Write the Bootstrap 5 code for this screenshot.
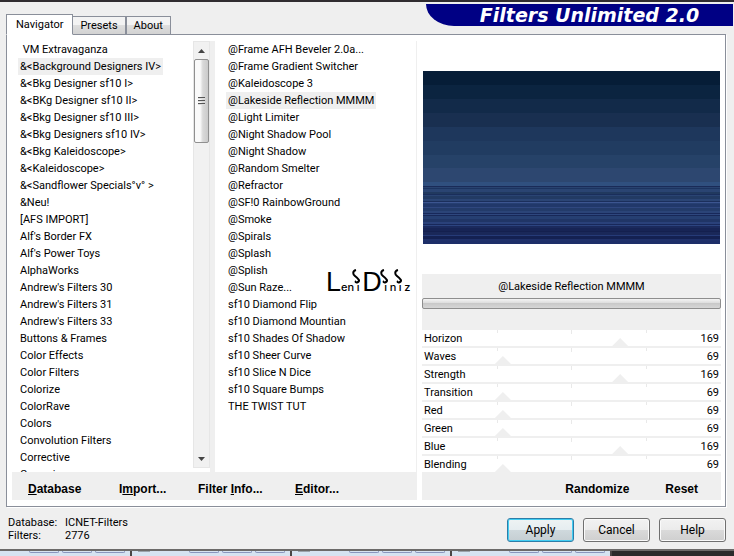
<!DOCTYPE html>
<html lang="en">
<head>
<meta charset="utf-8">
<meta name="viewport" content="width=device-width, initial-scale=1">
<title>Filters Unlimited 2.0</title>
<link href="https://cdn.jsdelivr.net/npm/bootstrap@5.3.0/dist/css/bootstrap.min.css" rel="stylesheet">
<style>
  :root { --face: #efefef; --edge: #8a8f9a; }
  body { font: 11px/17px Roboto, "Liberation Sans", sans-serif; color: #000; background: var(--face); }
  button { font: inherit; color: inherit; }
  .window-body { border-top: 2px solid #302c30; border-bottom: 2px solid #6c6a69; padding: 0 8px 7px 6px; min-height: 0; }
  .top-strip { height: 32px; margin-right: -7px; }
  .app-tabs { margin-bottom: -1px; z-index: 1; }
  .app-tabs .nav-link { border: 1px solid var(--edge); border-radius: 0; color: #000; padding: 0 7px; height: 19px; line-height: 18px; background: linear-gradient(#f3f3f3 50%, #dedede 50%, #d2d2d2); }
  .app-tabs .nav-item + .nav-item .nav-link { border-left-width: 0; }
  .app-tabs .nav-item:last-child .nav-link { border-left-width: 1px; }
  .app-tabs .nav-link.active { height: 21px; padding: 0 9px; line-height: 19px; background: #fff; border-color: var(--edge) var(--edge) #fff; color: #000; }
  .brand-banner { width: 307px; height: 22px; margin-top: 2px; background: #000084; border-bottom-left-radius: 28px 22px; color: #fff; font: italic bold 19px/22px "DejaVu Sans", sans-serif; padding-left: 20px; }
  .panel { border: 1px solid var(--edge); background: #fff; padding: 6px 4px 6px 5px; min-height: 0; box-shadow: 1px 1px #fff; }
  .lists-side { flex: 0 0 405px; min-width: 0; }
  .list-pair { min-height: 0; }
  .pick-list { min-height: 0; padding: 0 0 0 6px; }
  .pick-list button { border: 0; background: none; padding: 0 2px; height: 17px; line-height: 17px; white-space: pre; }
  .pick-list li { flex: 0 0 17px; height: 17px; }
  .pick-list button.chosen { background: var(--face); }
  .categories { flex: 0 0 181px; }
  .scroller { width: 17px; background: #f1f1f1; border: 1px solid #e6e6e6; }
  .scroller button { border: 0; background: none; padding: 0; height: 17px; line-height: 0; }
  .grip { height: 84px; border: 1px solid #909090; border-radius: 2px; background: linear-gradient(90deg, #fafafa 40%, #d9d9d9 60%, #cacaca); }
  .grip i { width: 7px; height: 2px; background: #555; border-bottom: 1px solid #ddd; margin-bottom: 1px; }
  .filters { border-left: 5px solid var(--face); border-right: 1px solid var(--face); padding-left: 11px; }
  .command-bar { height: 28px; flex: none; background: var(--face); font: bold 12px/28px "Liberation Sans", sans-serif; }
  .command-bar button { border: 0; background: none; padding: 0; line-height: 34px; text-align: left; }
  .list-commands { display: grid; grid-template-columns: 91px 79px 97px auto; padding-left: 16px; }
  .value-commands { gap: 36px; padding-right: 23px; }
  .settings-side { padding-left: 5px; min-width: 0; }
  .signature { position: absolute; left: 111px; top: 223px; font: 500 11px/36px Inter, sans-serif; pointer-events: none; }
  .signature .tall { font: 27px/36px "Liberation Sans Narrow", "Liberation Sans", sans-serif; }
  .signature .curl { position: relative; display: inline-block; width: 8px; line-height: 12px; text-align: center; }
  .signature svg { position: absolute; left: -2px; top: -12px; }
  .preview { height: 173px; margin: 30px 1px 30px; flex: none; }
  .info { background: var(--face); height: 56px; padding-top: 4px; }
  .info .progress { --bs-progress-height: 11px; border: 1px solid #8e8e8e; border-radius: 2px; background: linear-gradient(#f4f4f4, #dcdcdc 45%, #c9c9c9 50%, #d6d6d6); margin-top: 3px; }
  .control { height: 18px; border-bottom: 2px solid var(--face); padding: 0 2px; position: relative; }
  .control:last-child { height: 16px; border-bottom: 0; }
  .control input { position: absolute; left: -9px; right: -9px; top: 0; width: calc(100% + 18px); height: 17px; margin: 0; appearance: none;
    background: linear-gradient(#e9e9e9, #e9e9e9) calc(9px + (100% - 18px) * .25) 0 / 1px 3px no-repeat,
                linear-gradient(#e9e9e9, #e9e9e9) 50% 0 / 1px 4px no-repeat,
                linear-gradient(#e9e9e9, #e9e9e9) calc(9px + (100% - 18px) * .75) 0 / 1px 3px no-repeat; }
  .control input::-webkit-slider-thumb { appearance: none; width: 18px; height: 9px; margin-top: 8px; background: var(--face); clip-path: polygon(50% 0, 100% 100%, 0 100%); }
  .control input::-moz-range-thumb { width: 18px; height: 9px; border: 0; border-radius: 0; background: var(--face); clip-path: polygon(50% 0, 100% 100%, 0 100%); }
  .status { line-height: 13px; display: grid; grid-template-columns: 57px auto; margin: 9px 0 0 2px; }
  .dialog-row { gap: 9px; }
  .dialog-btn { width: 67px; height: 24px; padding: 0; font-size: 12px; line-height: 22px; color: #000; border: 1px solid #707070; border-radius: 3px; background: linear-gradient(#f2f2f2, #ebebeb 50%, #dadada 50%, #cfcfcf); box-shadow: inset 0 0 0 1px #fafafa; }
  .dialog-btn.preferred { border-color: #2d7da8; box-shadow: inset 0 0 0 1px #42cdf2; background: linear-gradient(#eef3f4, #e5edf0 50%, #cfd9dd 50%, #c5ced2); }
  .backdrop { height: 5px; background: #2b2b2b; }
  .cell { width: 160px; background: #d6e3f1; border-right: 2px solid #494545; padding: 0 5px 0 6px; }
  .cell:first-child { width: 132px; }
  .cell span { width: 30px; height: 2px; border: 1px solid #8996bd; border-top: 0; border-radius: 0 0 2px 2px; margin-left: 3px; }
  .cell b { width: 12px; height: 1px; background: #9aa3ab; }
</style>
<script src="https://cdn.jsdelivr.net/npm/bootstrap@5.3.0/dist/js/bootstrap.bundle.min.js"></script>
</head>
<body class="vh-100 d-flex flex-column overflow-hidden">
<main class="window-body flex-fill d-flex flex-column">
  <header class="top-strip d-flex justify-content-between align-items-start flex-shrink-0">
    <ul class="nav app-tabs align-self-end align-items-end position-relative">
      <li class="nav-item"><a class="nav-link active" href="#navigator">Navigator</a></li>
      <li class="nav-item"><a class="nav-link" href="#presets">Presets</a></li>
      <li class="nav-item"><a class="nav-link" href="#about">About</a></li>
    </ul>
    <div class="brand-banner text-center text-nowrap">Filters Unlimited 2.0</div>
  </header>

  <section class="panel flex-fill d-flex" id="navigator">
    <div class="lists-side d-flex flex-column">
      <div class="list-pair flex-fill d-flex">
        <ul class="pick-list categories list-unstyled mb-0 overflow-hidden d-flex flex-column">
          <li><button type="button"> VM Extravaganza</button></li>
          <li><button type="button" class="chosen">&amp;&lt;Background Designers IV&gt;</button></li>
          <li><button type="button">&amp;&lt;Bkg Designer sf10 I&gt;</button></li>
          <li><button type="button">&amp;&lt;BKg Designer sf10 II&gt;</button></li>
          <li><button type="button">&amp;&lt;Bkg Designer sf10 III&gt;</button></li>
          <li><button type="button">&amp;&lt;Bkg Designers sf10 IV&gt;</button></li>
          <li><button type="button">&amp;&lt;Bkg Kaleidoscope&gt;</button></li>
          <li><button type="button">&amp;&lt;Kaleidoscope&gt;</button></li>
          <li><button type="button">&amp;&lt;Sandflower Specials°v° &gt;</button></li>
          <li><button type="button">&amp;Neu!</button></li>
          <li><button type="button">[AFS IMPORT]</button></li>
          <li><button type="button">Alf's Border FX</button></li>
          <li><button type="button">Alf's Power Toys</button></li>
          <li><button type="button">AlphaWorks</button></li>
          <li><button type="button">Andrew's Filters 30</button></li>
          <li><button type="button">Andrew's Filters 31</button></li>
          <li><button type="button">Andrew's Filters 33</button></li>
          <li><button type="button">Buttons &amp; Frames</button></li>
          <li><button type="button">Color Effects</button></li>
          <li><button type="button">Color Filters</button></li>
          <li><button type="button">Colorize</button></li>
          <li><button type="button">ColorRave</button></li>
          <li><button type="button">Colors</button></li>
          <li><button type="button">Convolution Filters</button></li>
          <li><button type="button">Corrective</button></li>
          <li><button type="button">Corrosion</button></li>
        </ul>
        <div class="scroller d-flex flex-column flex-shrink-0 mb-1">
          <button type="button" aria-label="Scroll up"><svg width="7" height="4"><path d="M0 4L3.500 0L7 4z" fill="#444"/></svg></button>
          <div class="grip d-flex flex-column align-items-center justify-content-center"><i></i><i></i><i></i></div>
          <button type="button" class="mt-auto" aria-label="Scroll down"><svg width="7" height="4"><path d="M0 0H7L3.500 4z" fill="#444"/></svg></button>
        </div>
        <div class="filters flex-fill position-relative d-flex">
          <ul class="pick-list list-unstyled mb-0 ps-0 overflow-hidden d-flex flex-column">
            <li><button type="button">@Frame AFH Beveler 2.0a...</button></li>
            <li><button type="button">@Frame Gradient Switcher</button></li>
            <li><button type="button">@Kaleidoscope 3</button></li>
            <li><button type="button" class="chosen">@Lakeside Reflection MMMM</button></li>
            <li><button type="button">@Light Limiter</button></li>
            <li><button type="button">@Night Shadow Pool</button></li>
            <li><button type="button">@Night Shadow</button></li>
            <li><button type="button">@Random Smelter</button></li>
            <li><button type="button">@Refractor</button></li>
            <li><button type="button">@SF!0 RainbowGround</button></li>
            <li><button type="button">@Smoke</button></li>
            <li><button type="button">@Spirals</button></li>
            <li><button type="button">@Splash</button></li>
            <li><button type="button">@Splish</button></li>
            <li><button type="button">@Sun Raze...</button></li>
            <li><button type="button">sf10 Diamond Flip</button></li>
            <li><button type="button">sf10 Diamond Mountian</button></li>
            <li><button type="button">sf10 Shades Of Shadow</button></li>
            <li><button type="button">sf10 Sheer Curve</button></li>
            <li><button type="button">sf10 Slice N Dice</button></li>
            <li><button type="button">sf10 Square Bumps</button></li>
            <li><button type="button">THE TWIST TUT</button></li>
          </ul>
          <div class="signature text-nowrap"><span class="tall">L</span>en<span class="curl">ı<svg width="10" height="16" fill="none" stroke="#000" stroke-width="2"><path d="M4 1C0 2 1 6 3 7C7 10 8 12 6 13C4 14 3 13 4 12"/></svg></span><span class="tall">D</span><span class="curl">ı<svg width="10" height="16" fill="none" stroke="#000" stroke-width="2"><path d="M4 1C0 2 1 6 3 7C7 10 8 12 6 13C4 14 3 13 4 12"/></svg></span>n<span class="curl">ı<svg width="10" height="16" fill="none" stroke="#000" stroke-width="2"><path d="M4 1C0 2 1 6 3 7C7 10 8 12 6 13C4 14 3 13 4 12"/></svg></span>z</div>
        </div>
      </div>
      <div class="command-bar list-commands">
        <button type="button"><u>D</u>atabase</button>
        <button type="button">I<u>m</u>port...</button>
        <button type="button">Filter <u>I</u>nfo...</button>
        <button type="button"><u>E</u>ditor...</button>
      </div>
    </div>

    <div class="settings-side flex-fill d-flex flex-column">
      <svg class="preview" id="preview" viewBox="0 0 10 173" preserveAspectRatio="none" shape-rendering="crispEdges" role="img" aria-label="Filter preview"></svg>
      <div class="info text-center">
        <div>@Lakeside Reflection MMMM</div>
        <div class="progress" role="progressbar" aria-label="Render progress" aria-valuenow="0" aria-valuemin="0" aria-valuemax="100"></div>
      </div>
      <div id="controls"></div>
      <div class="command-bar value-commands d-flex justify-content-end mt-auto">
        <button type="button">Randomize</button>
        <button type="button">Reset</button>
      </div>
    </div>
  </section>

  <footer class="d-flex justify-content-between flex-shrink-0">
    <div class="status"><span>Database:</span><span>ICNET-Filters</span><span>Filters:</span><span>2776</span></div>
    <div class="dialog-row d-flex align-items-end">
      <button type="button" class="btn dialog-btn preferred">Apply</button>
      <button type="button" class="btn dialog-btn">Cancel</button>
      <button type="button" class="btn dialog-btn">Help</button>
    </div>
  </footer>
</main>
<div class="backdrop d-flex flex-shrink-0" aria-hidden="true">
  <div class="cell d-flex justify-content-end"><span></span><span></span><span></span></div>
  <div class="cell d-flex"><b class="me-auto"></b><span></span><span></span><span></span></div>
  <div class="cell d-flex"><b class="me-auto"></b><span></span><span></span><span></span></div>
  <div class="cell d-flex"><b class="me-auto"></b><span></span><span></span><span></span></div>
</div>
<script>
  // Preview: sky in flat bands, then water in thin streaks. Each entry is [height, colour].
  const bands = [[14,'#061d37'],[14,'#0b2440'],[14,'#122a49'],[14,'#192f50'],[14,'#1e375c'],[14,'#213c61'],[13,'#264268'],[14,'#2d4770'],[4,'#30507f'],
    [1,'#1a2b58'],[1,'#294370'],[1,'#1c3460'],[3,'#2a4472'],[2,'#21395f'],[1,'#1a2e5b'],[1,'#2a4473'],[3,'#223a63'],[2,'#2b4575'],[1,'#1b2f5c'],[1,'#3c5590'],[1,'#263f72'],
    [3,'#21386a'],[1,'#2f477f'],[3,'#233b6a'],[2,'#2b4478'],[1,'#18285a'],[1,'#2e477e'],[1,'#182858'],[3,'#263f72'],[3,'#203566'],[2,'#2a417a'],[1,'#18285a'],[1,'#2c4480'],
    [2,'#1b2a5d'],[3,'#172455'],[1,'#14204f'],[3,'#1a2859'],[1,'#263b78'],[3,'#142152'],[2,'#1f3069'],[4,'#1d2e68'],[5,'#1b2a60']];
  let y = 0;
  document.getElementById('preview').innerHTML = bands.map(([h, c]) => {
    const r = `<rect y="${y}" width="10" height="${h}" fill="${c}"/>`;
    y += h;
    return r;
  }).join('');

  const settings = [['Horizon',169],['Waves',69],['Strength',169],['Transition',69],['Red',69],['Green',69],['Blue',169],['Blending',69]];
  document.getElementById('controls').innerHTML = settings.map(([name, v]) =>
    `<div class="control d-flex justify-content-between"><label for="c-${name}">${name}</label><output for="c-${name}">${v}</output><input type="range" id="c-${name}" min="0" max="255" value="${v}"></div>`).join('');
</script>
</body>
</html>
